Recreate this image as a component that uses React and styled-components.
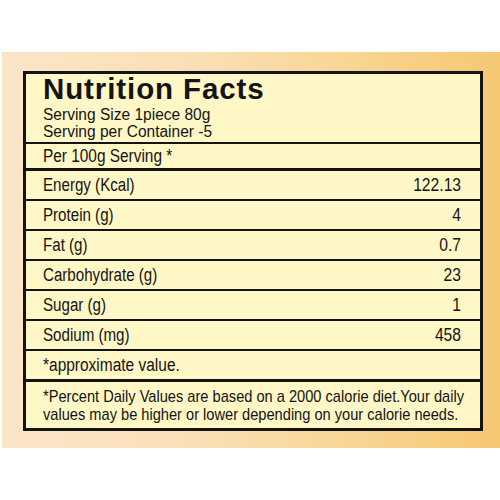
import React from 'react';
import styled, { createGlobalStyle } from 'styled-components';

const GlobalStyle = createGlobalStyle`
  html, body {
    margin: 0;
    padding: 0;
    background: #fff;
  }
  body {
    width: 500px;
    height: 500px;
    overflow: hidden;
  }
`;

const NARROW = 0.84;

const Frame = styled.div`
  margin: 52px 0 0 2px;
  height: 396px;
  box-sizing: border-box;
  padding: 19px 17px 17px 21px;
  background: linear-gradient(90deg, #fbe5c8 0%, #fadfb5 40%, #f8d593 70%, #f5c772 100%);
`;

const Label = styled.div`
  box-sizing: border-box;
  height: 360px;
  border: 3px solid #141414;
  background: #fff7c6;
  color: #141414;
  font-family: 'Liberation Sans', Arial, sans-serif;
  display: flex;
  flex-direction: column;
  overflow: hidden;
`;

const Header = styled.div`
  padding: 2px 17px 2px;
  border-bottom: 2px solid #141414;
`;

const Title = styled.h1`
  margin: 0 0 4px;
  font-weight: 700;
  font-size: 29.5px;
  line-height: 26px;
  letter-spacing: 0.9px;
`;

const SubLine = styled.div`
  font-size: 16px;
  line-height: 17px;
  white-space: nowrap;
  transform: scaleX(0.97);
  transform-origin: left center;
`;

const Row = styled.div`
  display: flex;
  align-items: center;
  justify-content: space-between;
  height: ${(p) => p.$h || 28}px;
  padding: 0 19px 0 17px;
  border-bottom: ${(p) => (p.$thick ? 3 : 2)}px solid #141414;
  font-size: ${(p) => p.$size || 18}px;
  flex: none;
`;

const Narrow = styled.span`
  display: inline-block;
  white-space: nowrap;
  transform: scaleX(${(p) => p.$scale || NARROW});
  transform-origin: ${(p) => (p.$right ? 'right' : 'left')} center;
`;

const Note = styled.div`
  flex: 1;
  padding: 6px 17px 0;
  font-size: 17px;
  line-height: 18px;
`;

const NoteText = styled.div`
  white-space: nowrap;
  transform: scaleX(0.86);
  transform-origin: left top;
`;

const nutrients = [
  ['Energy (Kcal)', '122.13'],
  ['Protein (g)', '4'],
  ['Fat (g)', '0.7'],
  ['Carbohydrate (g)', '23'],
  ['Sugar (g)', '1'],
  ['Sodium (mg)', '458'],
];

export default function App() {
  return (
    <>
      <GlobalStyle />
      <Frame>
        <Label>
          <Header>
            <Title>Nutrition Facts</Title>
            <SubLine>Serving Size 1piece 80g</SubLine>
            <SubLine>Serving per Container -5</SubLine>
          </Header>
          <Row $h={24} $thick $size={17.5}>
            <Narrow $scale={0.88}>Per 100g Serving *</Narrow>
          </Row>
          {nutrients.map(([name, value]) => (
            <Row key={name}>
              <Narrow>{name}</Narrow>
              <Narrow $right $scale={0.87}>{value}</Narrow>
            </Row>
          ))}
          <Row $thick>
            <Narrow $scale={0.86}>*approximate value.</Narrow>
          </Row>
          <Note>
            <NoteText>
              *Percent Daily Values are based on a 2000 calorie diet.Your daily
              <br />
              values may be higher or lower depending on your calorie needs.
            </NoteText>
          </Note>
        </Label>
      </Frame>
    </>
  );
}
